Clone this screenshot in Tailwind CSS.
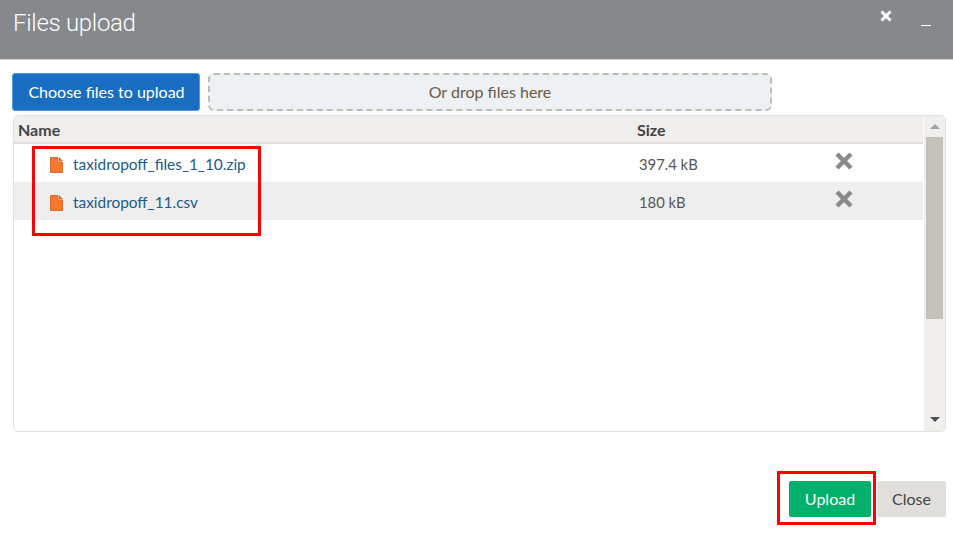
<!DOCTYPE html>
<html lang="en">

<head>
    <meta charset="UTF-8">
    <title>Files upload</title>
    <script src="https://cdn.jsdelivr.net/npm/@tailwindcss/browser@4"></script>
</head>

<body class="bg-white overflow-hidden">
    <div class="relative w-[953px] h-[534px] font-['Lato',sans-serif] text-[15.4px] text-[#444]">

        <!--header-->
        <div class="flex justify-between h-[60px] bg-[#85898c] border-b border-[#d4d4d4] text-white">
            <div class="pl-[13px] pt-[8px] font-['Roboto',sans-serif] text-[24px] leading-[30px] font-light tracking-[-0.3px]">Files upload</div>
            <div class="flex items-start">
                <svg class="mt-[10px] w-[12px] h-[12px]" viewBox="0 0 12 12">
                    <path d="M1.5 1.5L10.5 10.5M10.5 1.5L1.5 10.5" stroke="#fff" stroke-width="3" />
                </svg>
                <div class="mt-[25px] ml-[29px] mr-[22px] w-[10px] h-px bg-white"></div>
            </div>
        </div>

        <!--buttons-->
        <div class="flex gap-[8px] pl-[12px] pt-[13px] h-[55px]">
            <button class="w-[188px] h-[38px] pl-[1px] bg-[#1a6ec2] border border-[#4a9be8] rounded-[3px] text-white text-[16px]">Choose files to upload</button>
            <div class="flex items-center justify-center w-[564px] h-[38px] bg-[#edf1f4] border-2 border-dashed border-[#bdbcb6] rounded-[6px] text-[16px] text-[#6b5b45]">Or drop files here</div>
        </div>

        <!--table-->
        <div class="flex ml-[13px] mr-[7px] h-[317px] border border-[#e2e1de] rounded-[5px] overflow-hidden">
            <div class="flex-1">
                <div class="flex items-center h-[28px] pt-[2px] bg-[#f0efed] border-b-2 border-[#e2e1de] font-bold text-[16px] text-[#444]">
                    <div class="w-[623px] pl-[4px]">Name</div>
                    <div>Size</div>
                </div>
                <div class="flex items-center h-[38px]">
                    <div class="flex items-center w-[625px] pl-[36px] pt-[4px] gap-[10px] text-[#1d5a8a]">
                        <svg class="w-[13px] h-[16px]" viewBox="0 0 13 16">
                            <path d="M0.5 0.5H8V5H12.5V15.5H0.5Z" fill="#f9772e" stroke="#dc6a30" />
                            <path d="M9 0L13 4H9Z" fill="#dc6a30" />
                        </svg>
                        taxidropoff_files_1_10.zip
                    </div>
                    <div class="w-[195px] pt-[2px] text-[14.8px] text-[#555]">397.4 kB</div>
                    <svg class="w-[20px] h-[20px] -mt-[4px]" viewBox="0 0 20 20">
                        <path d="M3 3L17 17M17 3L3 17" stroke="#8a8a8a" stroke-width="4.5" />
                    </svg>
                </div>
                <div class="flex items-center h-[38px] bg-[#eeeeee]">
                    <div class="flex items-center w-[625px] pl-[36px] pt-[4px] gap-[10px] text-[#1d5a8a]">
                        <svg class="w-[13px] h-[16px]" viewBox="0 0 13 16">
                            <path d="M0.5 0.5H8V5H12.5V15.5H0.5Z" fill="#f9772e" stroke="#dc6a30" />
                            <path d="M9 0L13 4H9Z" fill="#dc6a30" />
                        </svg>
                        taxidropoff_11.csv
                    </div>
                    <div class="w-[195px] pt-[2px] text-[14.8px] text-[#555]">180 kB</div>
                    <svg class="w-[20px] h-[20px] -mt-[4px]" viewBox="0 0 20 20">
                        <path d="M3 3L17 17M17 3L3 17" stroke="#8a8a8a" stroke-width="4.5" />
                    </svg>
                </div>
            </div>

            <!--scrollbar-->
            <div class="flex flex-col ml-px w-[21px] px-[2px] bg-[#f0efed]">
                <div class="flex items-center justify-center h-[21px]">
                    <div class="w-0 h-0 border-x-[5px] border-x-transparent border-b-[5px] border-b-[#a3a3a3]"></div>
                </div>
                <div class="w-full h-[182px] bg-[#c3c1ba]"></div>
                <div class="flex-1 flex items-end justify-center pb-[9px]">
                    <div class="w-0 h-0 border-x-[5px] border-x-transparent border-t-[5px] border-t-[#505050]"></div>
                </div>
            </div>
        </div>

        <!--footer-->
        <div class="flex justify-end gap-[6px] pr-[7px] pt-[49px] text-[16px]">
            <button class="w-[82px] h-[36px] bg-[#00b06b] rounded-[2px] text-white">Upload</button>
            <button class="w-[69px] h-[36px] bg-[#e0dfdb] rounded-[2px] text-[#444]">Close</button>
        </div>

        <!-- red highlight boxes on top of the shot -->
        <div class="absolute left-[32px] top-[146px] w-[229px] h-[90px] border-[3px] border-[#ff0000]"></div>
        <div class="absolute left-[777px] top-[471px] w-[99px] h-[54px] border-[3px] border-[#ff0000]"></div>
    </div>
</body>

</html>
